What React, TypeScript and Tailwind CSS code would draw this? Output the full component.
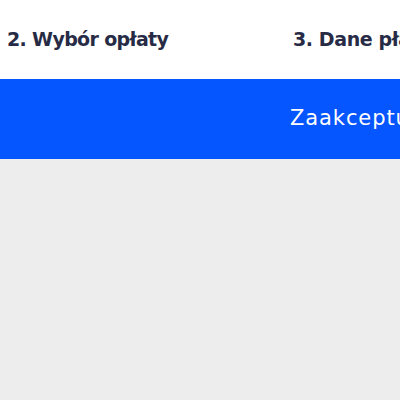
export default function App() {
  const font = { fontFamily: '"DejaVu Sans", "Noto Sans", sans-serif' };

  return (
    <div className="w-[400px] h-[400px] overflow-hidden bg-[#ededed]" style={font}>
      {/* Steps */}
      <div className="h-[79px] bg-white flex items-start pt-[25px] whitespace-nowrap">
        <div className="w-[293px] shrink-0 pl-[7px] text-[19px] font-bold text-[#272b45] tracking-[-0.65px]">
          2. Wybór opłaty
        </div>
        <div className="shrink-0 text-[19px] font-bold text-[#272b45] tracking-[-0.4px]">
          3. Dane płatności
        </div>
      </div>

      {/* Accept bar */}
      <div className="h-[80px] bg-[#0656ff] flex items-center whitespace-nowrap">
        <div className="pl-[290px] text-[21px] text-white tracking-[0.9px]">
          Zaakceptuj i zapłać
        </div>
      </div>
    </div>
  );
}
